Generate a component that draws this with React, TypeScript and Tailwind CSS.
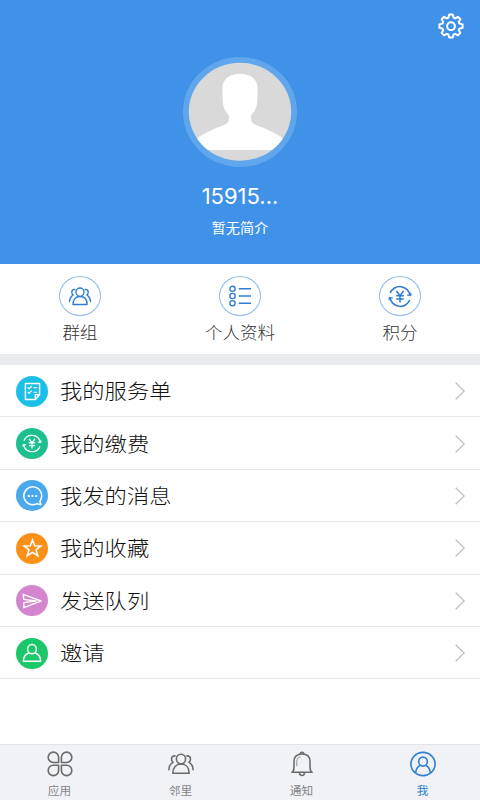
import type { ReactNode } from 'react'

function GearIcon() {
  return (
    <svg viewBox="0 0 26 26" className="w-[26px] h-[26px]" fill="none" stroke="currentColor" strokeWidth="2" strokeLinejoin="round">
      <path d="M11.200 1.600h3.600l.8 3.100 1.600.7 2.700-1.600 2.500 2.500-1.600 2.700.7 1.600 3.100.8v3.400l-3.100.8-.7 1.600 1.600 2.700-2.500 2.500-2.700-1.600-1.600.7-.8 3.100h-3.600l-.8-3.100-1.600-.7-2.700 1.600-2.500-2.500 1.600-2.700-.7-1.600-3.100-.8v-3.400l3.100-.8.7-1.600-1.600-2.700 2.500-2.500 2.700 1.600 1.600-.7z" />
      <circle cx="13" cy="13.200" r="3.900" />
    </svg>
  )
}

function Avatar() {
  return (
    <svg viewBox="0 0 114 110" className="w-[114px] h-[110px]">
      <defs>
        <clipPath id="face">
          <ellipse cx="57" cy="54.800" rx="51.200" ry="49" />
        </clipPath>
      </defs>
      <ellipse cx="57" cy="55" rx="57" ry="55" fill="#60a6ed" />
      <g clipPath="url(#face)">
        <rect width="114" height="110" fill="#d9d9d9" />
        <path d="M57 16.800C67.500 16.800 74.600 22 74.600 32c0 12-.3 17-2.600 21-2 3.500-4 4.500-4 7.500 0 4 .5 5.500 5 7.500 10 3.500 19 7.500 28 14v11H13V82c9-6.500 18-10.500 28-14 4.500-2 5-3.500 5-7.500 0-3-2-4-4-7.500-2.300-4-2.600-9-2.600-21 0-10 7.100-15.200 17.600-15.200z" fill="#fff" />
      </g>
    </svg>
  )
}

function PeopleIcon({ className }: { className: string }) {
  return (
    <svg viewBox="0 0 26 22" className={className} fill="none" stroke="currentColor" strokeWidth="1.600" strokeLinecap="round" strokeLinejoin="round">
      <ellipse cx="13" cy="6" rx="4.600" ry="4.800" />
      <path d="M4.800 20.200c0-5.800 3.200-9.200 8.200-9.200s8.200 3.400 8.200 9.200z" />
      <path d="M7 2.900c-2.200-.3-3.500 1.100-3.500 3.100 0 1.500.5 2.500 1.500 3.400C2.400 11 .9 13.300.9 16.800" />
      <path d="M19 2.900c2.200-.3 3.500 1.100 3.500 3.100 0 1.500-.5 2.500-1.500 3.400 2.600 1.600 4.100 3.900 4.100 7.400" />
    </svg>
  )
}

function ListIcon() {
  return (
    <svg viewBox="0 0 24 22" className="w-[24px] h-[22px]" fill="none" stroke="currentColor" strokeWidth="1.400">
      <circle cx="4.500" cy="3.800" r="2.600" />
      <circle cx="4.500" cy="11" r="2.600" />
      <circle cx="4.500" cy="18.200" r="2.600" />
      <path d="M10.800 3.800h12.200M10.800 11h12.200M10.800 18.200h12.200" />
    </svg>
  )
}

function YuanIcon({ className }: { className: string }) {
  return (
    <svg viewBox="0 0 24 24" className={className} fill="none" stroke="currentColor" strokeWidth="1.600">
      <path d="M1.800 8.400A10.800 10.800 0 0 1 22.500 11M22.200 15.600A10.800 10.800 0 0 1 1.500 13" />
      <path d="M19.500 10.500h3.800V8M4.500 13.500H.7V16" strokeWidth="1.300" />
      <path d="M8.300 6.300l3.700 5 3.700-5M12 11.300v7M8 11.300h8M8 14.700h8" />
    </svg>
  )
}

function OrderIcon() {
  return (
    <svg viewBox="0 0 18 20" className="w-[17px] h-[19px]" fill="none" stroke="currentColor" strokeWidth="1.500" strokeLinejoin="round">
      <path d="M1.500 1.500h15v12l-4.500 5H1.500z" />
      <path d="M16.500 13.500H12v5" />
      <path d="M4 5.700l1.400 1.500 2.700-3M4 10.500L5.400 12l2.700-3M10 6h4M10 10.800h4" strokeWidth="1.300" />
    </svg>
  )
}

function MessageIcon() {
  return (
    <svg viewBox="0 0 20 20" className="w-[21px] h-[20px]" fill="none" stroke="currentColor" strokeWidth="1.500" strokeLinejoin="round">
      <path d="M17.600 14.800A8.900 8.900 0 1 0 14.500 17.600c1.200.8 2.500 1 4 .9-.8-.9-1.100-2-.9-3.700z" />
      <path d="M5.400 10h1.800M9.100 10h1.800M12.800 10h1.800" strokeWidth="1.800" />
    </svg>
  )
}

function StarIcon() {
  return (
    <svg viewBox="0 0 20 20" className="w-[21px] h-[20px]" fill="none" stroke="currentColor" strokeWidth="1.600">
      <path d="M10 2l2.200 5.700 6.100.3-4.800 3.800 1.700 5.900L10 14.400l-5.200 3.300 1.700-5.900L1.700 8l6.100-.3z" />
    </svg>
  )
}

function SendIcon() {
  return (
    <svg viewBox="0 0 20 16" className="w-[20px] h-[16px]" fill="none" stroke="currentColor" strokeWidth="1.400" strokeLinejoin="round">
      <path d="M1.200 1.300L19 8 1.800 14.700V9.600L14 8 1.800 6.400z" />
    </svg>
  )
}

function PersonIcon() {
  return (
    <svg viewBox="0 0 20 20" className="w-[20px] h-[20px]" fill="none" stroke="currentColor" strokeWidth="1.500" strokeLinejoin="round">
      <ellipse cx="10" cy="6.200" rx="4.400" ry="4.600" />
      <path d="M6.800 10C3.500 11.200 1.500 13.800 1.300 18.200h17.400c-.2-4.400-2.200-7-5.500-8.200" />
    </svg>
  )
}

function AppsIcon() {
  return (
    <svg viewBox="0 0 26 26" className="w-[26px] h-[26px]" fill="none" stroke="currentColor" strokeWidth="1.600" strokeLinejoin="round">
      <path d="M11.600 11.500H6.300A5.200 5.200 0 1 1 11.600 6.200z" />
      <path d="M14.400 11.500h5.300A5.200 5.200 0 1 0 14.400 6.200z" />
      <path d="M11.600 14.200H6.300a5.200 5.200 0 1 0 5.300 5.300z" />
      <path d="M14.400 14.200h5.300a5.200 5.200 0 1 1-5.300 5.300z" />
    </svg>
  )
}

function BellIcon() {
  return (
    <svg viewBox="0 0 24 26" className="w-[24px] h-[26px]" fill="none" stroke="currentColor" strokeWidth="1.600" strokeLinejoin="round">
      <path d="M1.200 21.200h21.600M2.800 21c.9-1.500 1.200-3 1.200-5.500V10.500c0-4.800 3-7.500 8-7.500s8 2.700 8 7.500v5c0 2.500.3 4 1.200 5.500" />
      <path d="M10.200 3c0-2.300 3.600-2.300 3.600 0M9.500 21.500c0 4 5 4 5 0" />
      <path d="M10.500 5.700c-2.500.6-3.700 2-3.700 4.700v4.800" strokeWidth=".7" />
    </svg>
  )
}

function MeIcon() {
  return (
    <svg viewBox="0 0 26 26" className="w-[26px] h-[26px]" fill="none" stroke="currentColor" strokeWidth="1.600">
      <ellipse cx="13" cy="13" rx="12.100" ry="11.600" />
      <ellipse cx="13" cy="10.600" rx="4.300" ry="4.500" />
      <path d="M5.700 22c.3-4.100 1.900-6.600 4.900-8M20.300 22c-.3-4.100-1.900-6.600-4.900-8" />
    </svg>
  )
}

function Shortcut({ icon, label }: { icon: ReactNode; label: string }) {
  return (
    <div className="flex flex-col items-center">
      <div className="w-[42px] h-10 rounded-[50%] border border-[#8fb8ea] text-[#2e7cd3] flex items-center justify-center">
        {icon}
      </div>
      <span className="mt-1 text-[17.500px] leading-6 font-light text-[#333] scale-y-95">{label}</span>
    </div>
  )
}

const menu = [
  { label: '我的服务单', color: 'bg-[#1cbfe6]', icon: <OrderIcon /> },
  { label: '我的缴费', color: 'bg-[#1cc08f]', icon: <YuanIcon className="w-[20px] h-[19px]" /> },
  { label: '我发的消息', color: 'bg-[#4aa9ec]', icon: <MessageIcon /> },
  { label: '我的收藏', color: 'bg-[#fc9019]', icon: <StarIcon /> },
  { label: '发送队列', color: 'bg-[#d485cf]', icon: <SendIcon /> },
  { label: '邀请', color: 'bg-[#1bc768]', icon: <PersonIcon /> },
]

const tabs = [
  { label: '应用', icon: <AppsIcon /> },
  { label: '邻里', icon: <PeopleIcon className="w-[26px] h-[22px]" /> },
  { label: '通知', icon: <BellIcon /> },
  { label: '我', icon: <MeIcon />, active: true },
]

export default function App() {
  return (
    <div className="relative w-[480px] h-[800px] bg-white flex flex-col overflow-hidden font-['Noto_Sans_CJK_SC',sans-serif]">
      <header className="h-[263.500px] shrink-0 bg-[#4092e8] text-white flex flex-col items-center pt-[57px]">
        <button className="absolute right-4 top-[13px]">
          <GearIcon />
        </button>
        <Avatar />
        <h1 className="mt-[14px] text-[22px] leading-[30px] font-['Inter',sans-serif]">15915...</h1>
        <p className="mt-[6px] text-[14.200px] leading-5 scale-y-95">暂无简介</p>
      </header>

      <section className="h-[90.500px] shrink-0 grid grid-cols-3 pt-[12.500px]">
        <Shortcut icon={<PeopleIcon className="w-[24px] h-[19px]" />} label="群组" />
        <Shortcut icon={<ListIcon />} label="个人资料" />
        <Shortcut icon={<YuanIcon className="w-[24px] h-[23px]" />} label="积分" />
      </section>

      <div className="h-[11px] shrink-0 bg-[#ebecef]" />

      <ul>
        {menu.map((item) => (
          <li key={item.label} className="h-[52.400px] flex items-center pt-px pl-4 pr-[15px] border-b border-[#e6e6e6]">
            <span className={`w-8 h-[31px] rounded-[50%] text-white flex items-center justify-center ${item.color}`}>
              {item.icon}
            </span>
            <span className="ml-3 -mt-0.5 text-[22.300px] leading-8 font-light text-[#111] scale-y-93">{item.label}</span>
            <svg viewBox="0 0 10 18" className="ml-auto w-[10px] h-[18px]" fill="none" stroke="#bcbcbc" strokeWidth="1.200">
              <path d="M.7 .8L9.200 9 .7 17.200" />
            </svg>
          </li>
        ))}
      </ul>

      <nav className="mt-auto h-[56px] shrink-0 grid grid-cols-[repeat(4,121px)] -ml-px bg-[#f1f2f6] border-t border-[#e3e4e6]">
        {tabs.map((tab) => (
          <div key={tab.label} className={`flex flex-col items-center pt-[6px] ${tab.active ? 'text-[#2f7fd2]' : 'text-[#6b6b6e]'}`}>
            <div className="h-[26px] flex items-center">{tab.icon}</div>
            <span className={`mt-1 text-[11.700px] leading-[17px] ${tab.active ? '' : 'text-[#858588]'}`}>{tab.label}</span>
          </div>
        ))}
      </nav>
    </div>
  )
}
